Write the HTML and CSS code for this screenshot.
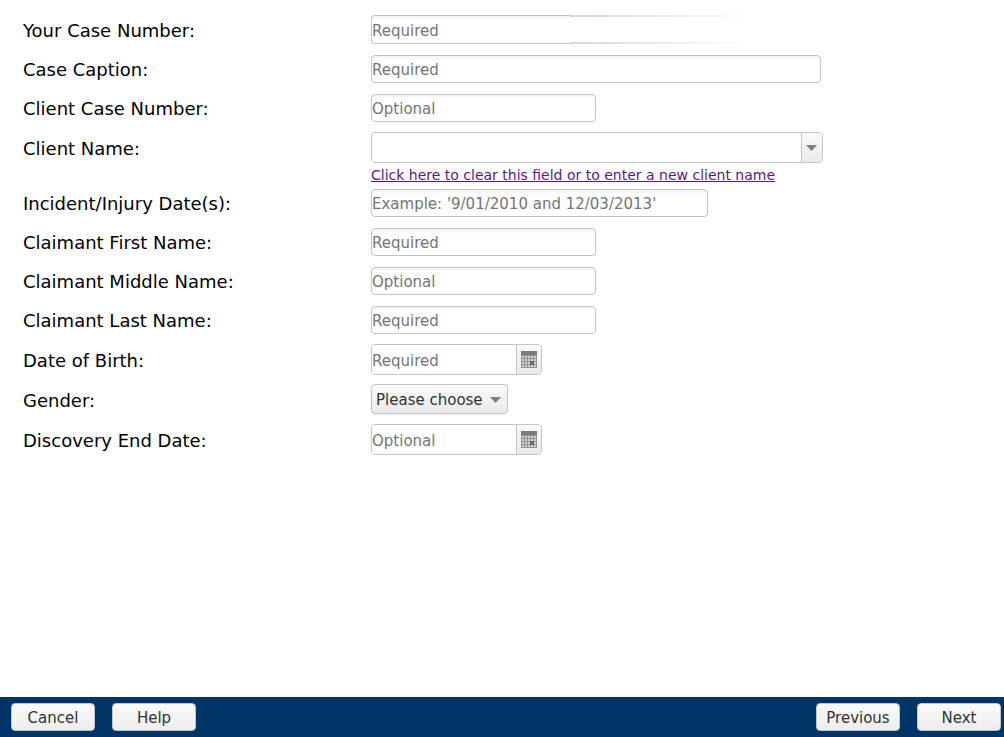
FILE: index.html
```html
<!DOCTYPE html>
<html lang="en">
<head>
<meta charset="utf-8">
<meta name="viewport" content="width=device-width, initial-scale=1">
<title>Case Information</title>
<link rel="stylesheet" href="styles.css">
</head>
<body>
<form class="page">
  <main class="fields">
    <div class="row">
      <label for="case-number">Your Case Number:</label>
      <div class="fading">
        <input class="text open" id="case-number" type="text" placeholder="Required">
        <span class="fade"></span>
      </div>
    </div>
    <div class="row">
      <label for="caption">Case Caption:</label>
      <input class="text wide" id="caption" type="text" placeholder="Required">
    </div>
    <div class="row">
      <label for="client-case">Client Case Number:</label>
      <input class="text" id="client-case" type="text" placeholder="Optional">
    </div>
    <div class="row">
      <label for="client-name">Client Name:</label>
      <div class="combo client">
        <input class="part" id="client-name" type="text">
        <button class="trigger narrow" type="button" aria-label="Show clients">
          <svg width="12" height="6" viewBox="0 0 12 6"><path d="M0 0h11L5.500 6z" fill="#808080"/></svg>
        </button>
      </div>
    </div>
    <div class="note">
      <a href="#client-name">Click here to clear this field or to enter a new client name</a>
    </div>
    <div class="row">
      <label for="incident">Incident/Injury Date(s):</label>
      <input class="text medium" id="incident" type="text" placeholder="Example: '9/01/2010 and 12/03/2013'">
    </div>
    <div class="row">
      <label for="first">Claimant First Name:</label>
      <input class="text" id="first" type="text" placeholder="Required">
    </div>
    <div class="row">
      <label for="middle">Claimant Middle Name:</label>
      <input class="text" id="middle" type="text" placeholder="Optional">
    </div>
    <div class="row">
      <label for="last">Claimant Last Name:</label>
      <input class="text" id="last" type="text" placeholder="Required">
    </div>
    <div class="row">
      <label for="birth">Date of Birth:</label>
      <div class="combo date">
        <input class="part" id="birth" type="text" placeholder="Required">
        <button class="trigger" type="button" aria-label="Pick date of birth">
          <svg width="16" height="17" viewBox="0 0 16 17">
            <path d="M0 0h16v17H0z" fill="#929292"/>
            <path d="M0 0h16v4H0z" fill="#7c7c7c"/>
            <path d="M1 5h2v2H1zM4 5h2v2H4zM7 5h2v2H7zM10 5h2v2h-2zM13 5h2v2h-2zM1 8h2v2H1zM4 8h2v2H4zM7 8h2v2H7zM10 8h2v2h-2zM13 8h2v2h-2zM1 11h2v2H1zM4 11h2v2H4zM7 11h2v2H7zM13 11h2v2h-2zM1 14h2v2H1zM4 14h2v2H4zM7 14h2v2H7zM10 14h2v2h-2zM13 14h2v2h-2z" fill="#d2d2d2"/>
            <path d="M9 10h4v4H9z" fill="#6b6b6b"/>
          </svg>
        </button>
      </div>
    </div>
    <div class="row">
      <label for="gender">Gender:</label>
      <div class="choice">
        <select id="gender">
          <option>Please choose</option>
          <option>Female</option>
          <option>Male</option>
        </select>
        <svg width="11" height="6" viewBox="0 0 11 6"><path d="M0 0h11L5.500 6z" fill="#808080"/></svg>
      </div>
    </div>
    <div class="row">
      <label for="discovery">Discovery End Date:</label>
      <div class="combo date">
        <input class="part" id="discovery" type="text" placeholder="Optional">
        <button class="trigger" type="button" aria-label="Pick discovery end date">
          <svg width="16" height="17" viewBox="0 0 16 17">
            <path d="M0 0h16v17H0z" fill="#929292"/>
            <path d="M0 0h16v4H0z" fill="#7c7c7c"/>
            <path d="M1 5h2v2H1zM4 5h2v2H4zM7 5h2v2H7zM10 5h2v2h-2zM13 5h2v2h-2zM1 8h2v2H1zM4 8h2v2H4zM7 8h2v2H7zM10 8h2v2h-2zM13 8h2v2h-2zM1 11h2v2H1zM4 11h2v2H4zM7 11h2v2H7zM13 11h2v2h-2zM1 14h2v2H1zM4 14h2v2H4zM7 14h2v2H7zM10 14h2v2h-2zM13 14h2v2h-2z" fill="#d2d2d2"/>
            <path d="M9 10h4v4H9z" fill="#6b6b6b"/>
          </svg>
        </button>
      </div>
    </div>
  </main>
  <footer class="bar">
    <button class="button" type="button">Cancel</button>
    <button class="button" type="button">Help</button>
    <button class="button forward" type="button">Previous</button>
    <button class="button" type="button">Next</button>
  </footer>
</form>
</body>
</html>
```
FILE: styles.css
```css
* {
  box-sizing: border-box;
}

body {
  margin: 0;
  background: #fff;
  color: #000;
  font-family: Verdana, "DejaVu Sans", sans-serif;
}

.page {
  display: flex;
  flex-direction: column;
  min-height: 100vh;
}

.fields {
  flex: 1;
  padding: 10px 23px;
}

.row {
  display: grid;
  grid-template-columns: 348px minmax(0, 1fr);
  grid-template-rows: minmax(30px, auto);
  align-items: center;
  padding: 5px 0 4px;
}

label {
  padding-top: 2px;
  font-size: 18px;
  line-height: 24px;
}

input,
select,
button {
  margin: 0;
  font-family: inherit;
  font-size: 15px;
}

input::placeholder {
  color: #757575;
  opacity: 1;
}

.text {
  width: 225px;
  max-width: 100%;
  height: 28px;
  padding: 2px 0 0;
  border: 1px solid #c5c5c5;
  border-radius: 4px;
  background: linear-gradient(#f3f3f3, #fff 4px);
}

.medium {
  width: 337px;
}

.wide {
  width: 450px;
}

.fading {
  display: flex;
  align-self: start;
  height: 29px;
}

.open {
  width: 199px;
  height: 100%;
  border-right: 0;
  border-radius: 4px 0 0 4px;
}

.fade {
  width: 180px;
  background:
    linear-gradient(90deg, #d6d6d6, #fff) top / 100% 2px no-repeat,
    linear-gradient(90deg, #d6d6d6, #fff) bottom / 100% 2px no-repeat;
}

.combo {
  display: flex;
  max-width: 100%;
  height: 31px;
  border: 1px solid #c5c5c5;
  border-radius: 4px;
  overflow: hidden;
}

.client {
  width: 452px;
}

.date {
  width: 171px;
}

.part {
  flex: 1;
  min-width: 0;
  padding: 2px 0 0;
  border: 0;
  background: #fff;
}

.trigger {
  display: flex;
  align-items: center;
  justify-content: center;
  width: 25px;
  padding: 0;
  border: 0;
  border-left: 1px solid #c5c5c5;
  background: linear-gradient(#fafafa, #eaeaea);
}

.narrow {
  width: 21px;
}

.choice {
  position: relative;
  width: 137px;
  height: 31px;
}

.choice select {
  width: 100%;
  height: 30px;
  padding: 2px 4px 0;
  border: 1px solid #c5c5c5;
  border-radius: 4px;
  appearance: none;
  background: linear-gradient(#fafafa, #eaeaea);
  box-shadow: 0 1px 2px rgba(0, 0, 0, 0.08);
  color: #333;
}

.choice svg {
  position: absolute;
  top: 13px;
  right: 7px;
  pointer-events: none;
}

.note {
  padding-left: 348px;
  font-size: 14px;
  line-height: 16px;
}

.note a {
  color: #551a8b;
}

.bar {
  display: flex;
  gap: 17px;
  padding: 6px 3px 6px 11px;
  background: #003366;
}

.button {
  width: 84px;
  height: 28px;
  padding: 2px 0 0;
  border: 1px solid #c5c5c5;
  border-radius: 4px;
  background: linear-gradient(#fafafa, #ededed);
  color: #333;
}

.forward {
  margin-left: auto;
}
```
